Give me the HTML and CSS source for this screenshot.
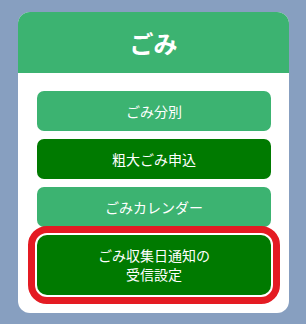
FILE: index.html
```html
<!DOCTYPE html>
<html lang="ja">
<head>
  <meta charset="utf-8">
  <title>ごみ</title>
  <link rel="stylesheet" href="styles.css">
</head>
<body>
  <div class="card">
    <div class="card-head">ごみ</div>
    <div class="card-body">
      <a class="btn light" href="#">ごみ分別</a>
      <a class="btn dark" href="#">粗大ごみ申込</a>
      <a class="btn light" href="#">ごみカレンダー</a>
      <a class="btn dark tall marked" href="#">ごみ収集日通知の<br>受信設定</a>
    </div>
  </div>
</body>
</html>
```

FILE: styles.css
```css
html, body {
  margin: 0;
  padding: 0;
}

body {
  background: #879fc0;
  font-family: "Noto Sans CJK JP", "Noto Sans", sans-serif;
  padding: 12px 0 0 18px;
}

.card {
  width: 271px;
  background: #fff;
  border-radius: 12px;
  overflow: hidden;
}

.card-head {
  background: #3cb371;
  color: #fff;
  font-size: 24px;
  font-weight: bold;
  text-align: center;
  height: 61px;
  line-height: 61px;
}

.card-body {
  display: flex;
  flex-direction: column;
  gap: 8px;
  padding: 18px 18px 18px 19px;
}

.btn {
  display: flex;
  align-items: center;
  justify-content: center;
  height: 40px;
  border-radius: 7px;
  color: #fff;
  font-size: 14px;
  text-align: center;
  text-decoration: none;
  line-height: 19px;
}

.light { background: #3cb371; }
.dark  { background: #007a00; }

.tall { height: 60px; }

/* highlighted item */
.marked {
  outline: 7px solid #e41b23;
  outline-offset: 2px;
  border-radius: 10px;
}
```
